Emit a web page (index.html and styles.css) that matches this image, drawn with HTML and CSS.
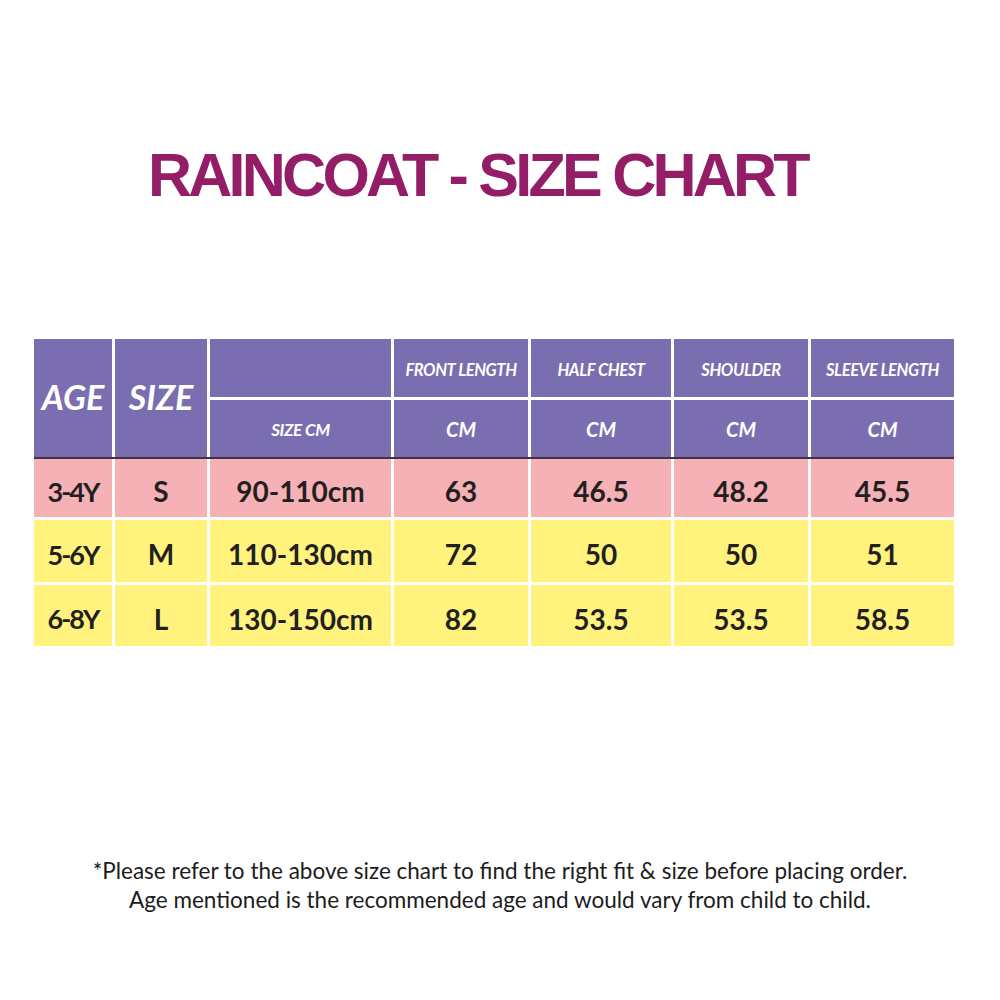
FILE: index.html
```html
<!DOCTYPE html>
<html>
<head>
<meta charset="utf-8">
<link rel="stylesheet" href="styles.css">
</head>
<body>
<h1 class="title">RAINCOAT - SIZE CHART</h1>
<div class="chart">
  <div class="head">
    <div class="hcell big span2">AGE</div>
    <div class="hcell big span2">SIZE</div>
    <div class="hcell"></div>
    <div class="hcell small">FRONT LENGTH</div>
    <div class="hcell small">HALF CHEST</div>
    <div class="hcell small">SHOULDER</div>
    <div class="hcell small">SLEEVE LENGTH</div>
    <div class="hcell small sizecm">SIZE CM</div>
    <div class="hcell cm">CM</div>
    <div class="hcell cm">CM</div>
    <div class="hcell cm">CM</div>
    <div class="hcell cm">CM</div>
  </div>
  <div class="body">
    <div class="cell age pink">3-4Y</div>
    <div class="cell pink">S</div>
    <div class="cell pink">90-110cm</div>
    <div class="cell pink">63</div>
    <div class="cell pink">46.5</div>
    <div class="cell pink">48.2</div>
    <div class="cell pink">45.5</div>

    <div class="cell age yellow">5-6Y</div>
    <div class="cell yellow">M</div>
    <div class="cell yellow">110-130cm</div>
    <div class="cell yellow">72</div>
    <div class="cell yellow">50</div>
    <div class="cell yellow">50</div>
    <div class="cell yellow">51</div>

    <div class="cell age yellow">6-8Y</div>
    <div class="cell yellow">L</div>
    <div class="cell yellow">130-150cm</div>
    <div class="cell yellow">82</div>
    <div class="cell yellow">53.5</div>
    <div class="cell yellow">53.5</div>
    <div class="cell yellow">58.5</div>
  </div>
</div>
<div class="note">
  <p>*Please refer to the above size chart to find the right fit &amp; size before placing order.</p>
  <p>Age mentioned is the recommended age and would vary from child to child.</p>
</div>
</body>
</html>
```

FILE: styles.css
```css
html, body {
  margin: 0;
  padding: 0;
  background: #ffffff;
}
body {
  width: 1000px;
  height: 1000px;
  overflow: hidden;
  font-family: Lato, "Open Sans", sans-serif;
}
.title {
  margin: 145px 0 0 148px;
  font-family: "Liberation Sans", Arial, sans-serif;
  font-weight: bold;
  font-size: 61px;
  line-height: 61px;
  letter-spacing: -3.75px;
  color: #931d66;
  white-space: nowrap;
}
.chart {
  margin: 133px 0 0 34px;
  width: 920px;
}
.head, .body {
  display: grid;
  grid-template-columns: 78px 92px 181px 134px 140px 134px 143px;
  column-gap: 3px;
  row-gap: 3px;
}
.head {
  grid-template-rows: 58px 57px;
  border-bottom: 2px solid #3b3443;
}
.body {
  grid-template-rows: 58px 62px 61px;
}
.hcell {
  background: #7a6eb0;
  color: #ffffff;
  font-weight: bold;
  font-style: italic;
  display: flex;
  align-items: center;
  justify-content: center;
}
.span2 {
  grid-row: span 2;
}
.big {
  font-size: 34px;
  padding-bottom: 4px;
}
.small {
  font-size: 16.5px;
  letter-spacing: -0.4px;
  padding-top: 4px;
}
.sizecm {
  font-size: 17px;
  padding-top: 2px;
}
.cm {
  font-size: 20px;
  padding-top: 0;
}
.cell {
  display: flex;
  align-items: center;
  justify-content: center;
  font-weight: bold;
  font-size: 28px;
  color: #231f20;
  padding-top: 6px;
}
.age {
  font-size: 27px;
  letter-spacing: -2px;
}
.pink {
  background: #f5b1b6;
}
.yellow {
  background: #fff37d;
}
.note {
  margin-top: 210px;
  text-align: center;
  font-size: 22.5px;
  line-height: 29px;
  color: #1c1c1c;
}
.note p {
  margin: 0;
}
```
